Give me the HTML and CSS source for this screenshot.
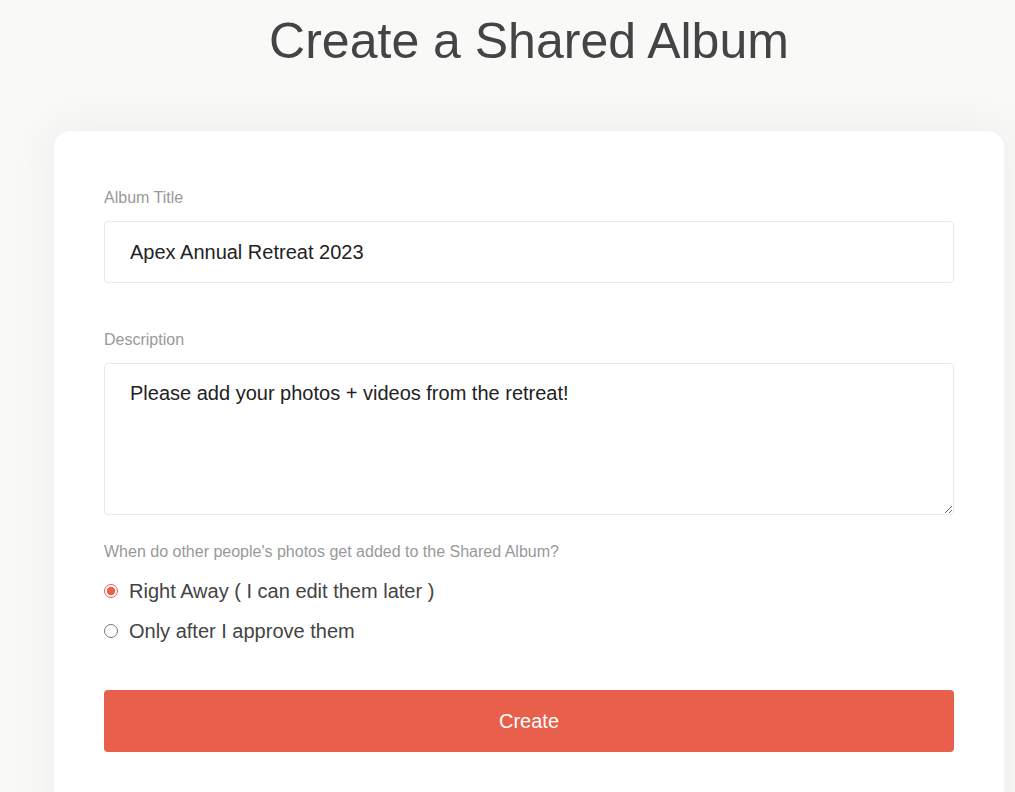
FILE: index.html
```html
<!DOCTYPE html>
<html>
<head>
    <title>Create a Shared Album</title>
    <link rel="stylesheet" href="styles.css">
</head>
<body>
<h1 class="page-title">Create a Shared Album</h1>
<div class="card">
    <form class="album-form">
        <label class="field-label" for="album_title">Album Title</label>
        <input class="field-input" id="album_title" type="text" value="Apex Annual Retreat 2023">

        <label class="field-label desc-label" for="album_desc">Description</label>
        <textarea class="field-input field-area" id="album_desc">Please add your photos + videos from the retreat!</textarea>

        <p class="question">When do other people's photos get added to the Shared Album?</p>
        <label class="radio-row">
            <input type="radio" name="approve" checked>
            <span>Right Away ( I can edit them later )</span>
        </label>
        <label class="radio-row">
            <input type="radio" name="approve">
            <span>Only after I approve them</span>
        </label>

        <button type="button" class="create-btn">Create</button>
    </form>
</div>
</body>
</html>
```

FILE: styles.css
```css
body {
  margin: 0;
  background: #f9f9f8;
  font-family: "Liberation Sans", Arial, sans-serif;
  overflow: hidden;
}

.page-title {
  margin: 0;
  padding-top: 12px;
  width: 1058px;
  text-align: center;
  font-size: 50px;
  font-weight: normal;
  line-height: 58px;
  color: #444;
}

.card {
  margin: 61px 0 0 54px;
  width: 950px;
  height: 700px;
  background: #fff;
  border-radius: 16px;
  box-shadow: 0 0 40px 10px rgba(0, 0, 0, 0.04);
}

.album-form {
  display: flex;
  flex-direction: column;
  padding: 58px 50px 0 50px;
}

.field-label {
  font-size: 16px;
  color: #999;
  line-height: 18px;
}

.desc-label {
  margin-top: 48px;
}

.field-input {
  margin-top: 14px;
  height: 62px;
  box-sizing: border-box;
  padding: 0 25px;
  border: 1px solid #e4e8ef;
  border-radius: 4px;
  font-family: inherit;
  font-size: 20px;
  color: #222;
  outline: none;
}

.field-area {
  height: 152px;
  padding: 18px 25px;
  resize: vertical;
}

.question {
  margin: 28px 0 10px 0;
  font-size: 16px;
  color: #999;
  line-height: 18px;
}

.radio-row {
  display: flex;
  align-items: center;
  gap: 11px;
  height: 40px;
  font-size: 20px;
  color: #444;
}

.radio-row input {
  margin: 0;
  width: 14px;
  height: 14px;
  accent-color: #e8604c;
}

.create-btn {
  margin-top: 39px;
  height: 62px;
  background-color: #e8604c;
  color: white;
  border: none;
  border-radius: 4px;
  font-family: inherit;
  font-size: 20px;
  cursor: pointer;
}

.create-btn:hover {
  opacity: 0.9;
}
```
